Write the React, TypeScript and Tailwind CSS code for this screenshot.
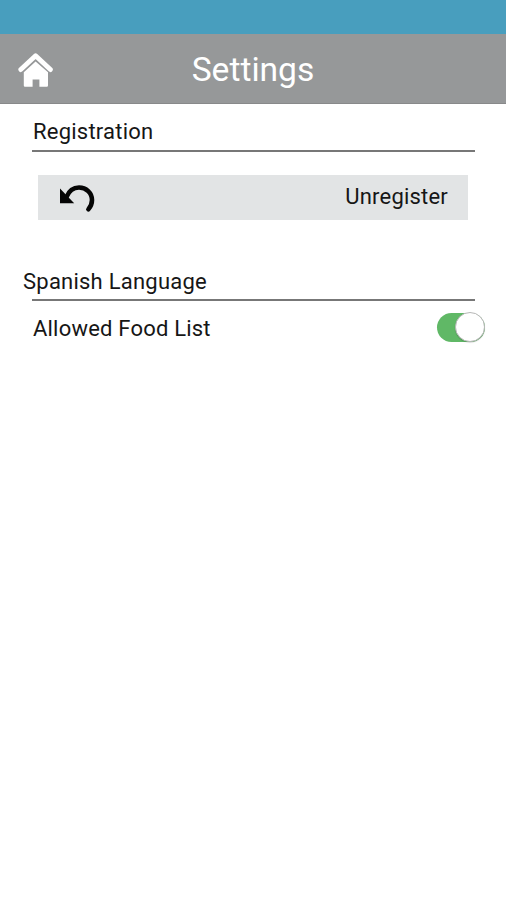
import type { ReactNode } from 'react';

const HomeIcon = () => (
  <svg width="36" height="36" viewBox="0 0 36 36" fill="none">
    <path d="M2.8 17.6 17.6 3.8 32.4 17.6" stroke="#fff" strokeWidth="4.8" strokeLinecap="round" strokeLinejoin="round" />
    <path d="M5.8 20.2 17.6 9.6 30 20.2V33.6Q30 34.8 28.8 34.8H21.4V27.4H14.6V34.8H7Q5.8 34.8 5.8 33.6Z" fill="#fff" />
  </svg>
);

const UndoIcon = () => (
  <svg width="38" height="30" viewBox="0 0 38 30" fill="none">
    <path d="M7.5 14C10 7.8 14.5 4.5 20 4.5C27.2 4.5 33 9.8 33 17C33 20.8 31.6 23.8 29.4 26.2" stroke="#050505" strokeWidth="4.6" strokeLinecap="round" />
    <path d="M1 5.5V20.2H15.2Z" fill="#050505" />
  </svg>
);

const SectionTitle = ({ children, className = '' }: { children: ReactNode; className?: string }) => (
  <h2 className={`text-[22px] leading-[26px] tracking-[0.23px] ${className}`}>{children}</h2>
);

const Divider = () => <div className="ml-8 mr-[31px] h-[2px] bg-[#777777]" />;

const Toggle = () => (
  <button
    role="switch"
    aria-checked="true"
    aria-label="Allowed Food List"
    className="flex h-[29px] w-[48px] items-center justify-end rounded-full bg-[#60b866]"
  >
    <span className="h-[30px] w-[30px] shrink-0 rounded-full border border-[#b8b8b8] bg-white shadow-[0_1px_1px_rgba(0,0,0,0.15)]" />
  </button>
);

export default function App() {
  return (
    <div className="min-h-[900px] w-full bg-white font-['Roboto',sans-serif] text-[#161616]">
      <div className="h-[34px] bg-[#489ebe]" />
      <header className="grid h-[70px] grid-cols-[1fr_auto_1fr] items-center border-b border-[#88898a] bg-[#969899] px-[18px] pt-[2px]">
        <button aria-label="Home" className="h-9 w-9">
          <HomeIcon />
        </button>
        <h1 className="text-[33.6px] leading-[40px] text-white">Settings</h1>
      </header>

      <section className="pt-[15px]">
        <SectionTitle className="pb-[5px] pl-[33px]">Registration</SectionTitle>
        <Divider />
        <button className="ml-[38px] mt-[23px] flex h-[45px] w-[430px] items-center justify-between bg-[#e2e4e5] pl-[21px] pr-[20px]">
          <UndoIcon />
          <span className="pb-[2px] text-[22px] leading-[26px] tracking-[0.2px]">Unregister</span>
        </button>
      </section>

      <section className="pt-[49px]">
        <SectionTitle className="pb-[4px] pl-[23px]">Spanish Language</SectionTitle>
        <Divider />
        <div className="flex h-[52px] items-center justify-between pl-[33px] pr-[21px]">
          <span className="pt-[3px] text-[22px] leading-[26px] tracking-[0.2px]">Allowed Food List</span>
          <Toggle />
        </div>
      </section>
    </div>
  );
}
